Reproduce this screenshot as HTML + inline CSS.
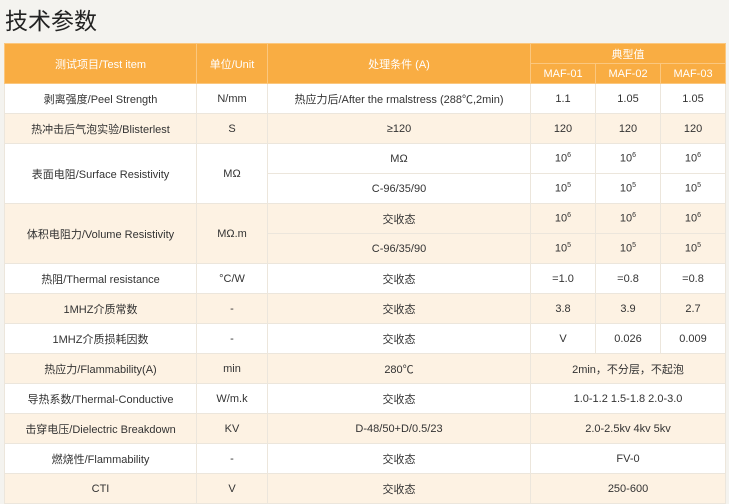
<!DOCTYPE html>
<html><head><meta charset="utf-8"><style>
body{margin:0;width:729px;height:500px;overflow:hidden;background:#f4f3ef;font-family:"Liberation Sans","Noto Sans CJK SC",sans-serif;color:#333}
h1{position:absolute;left:5px;top:2px;margin:0;font-size:23px;font-weight:normal;color:#222;font-family:"Noto Sans CJK SC",sans-serif}
table{position:absolute;left:4px;top:43px;border-collapse:collapse;table-layout:fixed;width:721px;font-size:11px}
td{border:1px solid #ece6dc;text-align:center;height:29px;padding:0;white-space:nowrap}
tr.h td{background:#f9ad43;color:#fff;border-color:#fbc77e;height:19px}
tr.w td{background:#fff}
tr.b td{background:#fdf2e3}
sup{font-size:7px}
</style></head><body>
<h1>技术参数</h1>
<table>
<colgroup><col style="width:192px"><col style="width:71px"><col style="width:263px"><col style="width:65px"><col style="width:65px"><col style="width:65px"></colgroup>
<tr class="h"><td rowspan="2">测试项目/Test item</td><td rowspan="2">单位/Unit</td><td rowspan="2">处理条件 (A)</td><td colspan="3">典型值</td></tr>
<tr class="h"><td>MAF-01</td><td>MAF-02</td><td>MAF-03</td></tr>
<tr class="w"><td>剥离强度/Peel Strength</td><td>N/mm</td><td>热应力后/After the rmalstress (288℃,2min)</td><td>1.1</td><td>1.05</td><td>1.05</td></tr>
<tr class="b"><td>热冲击后气泡实验/Blisterlest</td><td>S</td><td>≥120</td><td>120</td><td>120</td><td>120</td></tr>
<tr class="w"><td rowspan="2">表面电阻/Surface Resistivity</td><td rowspan="2">MΩ</td><td>MΩ</td><td>10<sup>6</sup></td><td>10<sup>6</sup></td><td>10<sup>6</sup></td></tr>
<tr class="w"><td>C-96/35/90</td><td>10<sup>5</sup></td><td>10<sup>5</sup></td><td>10<sup>5</sup></td></tr>
<tr class="b"><td rowspan="2">体积电阻力/Volume Resistivity</td><td rowspan="2">MΩ.m</td><td>交收态</td><td>10<sup>6</sup></td><td>10<sup>6</sup></td><td>10<sup>6</sup></td></tr>
<tr class="b"><td>C-96/35/90</td><td>10<sup>5</sup></td><td>10<sup>5</sup></td><td>10<sup>5</sup></td></tr>
<tr class="w"><td>热阻/Thermal resistance</td><td>°C/W</td><td>交收态</td><td>=1.0</td><td>=0.8</td><td>=0.8</td></tr>
<tr class="b"><td>1MHZ介质常数</td><td>-</td><td>交收态</td><td>3.8</td><td>3.9</td><td>2.7</td></tr>
<tr class="w"><td>1MHZ介质损耗因数</td><td>-</td><td>交收态</td><td>V</td><td>0.026</td><td>0.009</td></tr>
<tr class="b"><td>热应力/Flammability(A)</td><td>min</td><td>280℃</td><td colspan="3">2min，不分层，不起泡</td></tr>
<tr class="w"><td>导热系数/Thermal-Conductive</td><td>W/m.k</td><td>交收态</td><td colspan="3">1.0-1.2 1.5-1.8 2.0-3.0</td></tr>
<tr class="b"><td>击穿电压/Dielectric Breakdown</td><td>KV</td><td>D-48/50+D/0.5/23</td><td colspan="3">2.0-2.5kv 4kv 5kv</td></tr>
<tr class="w"><td>燃烧性/Flammability</td><td>-</td><td>交收态</td><td colspan="3">FV-0</td></tr>
<tr class="b"><td>CTI</td><td>V</td><td>交收态</td><td colspan="3">250-600</td></tr>
</table>
</body></html>
